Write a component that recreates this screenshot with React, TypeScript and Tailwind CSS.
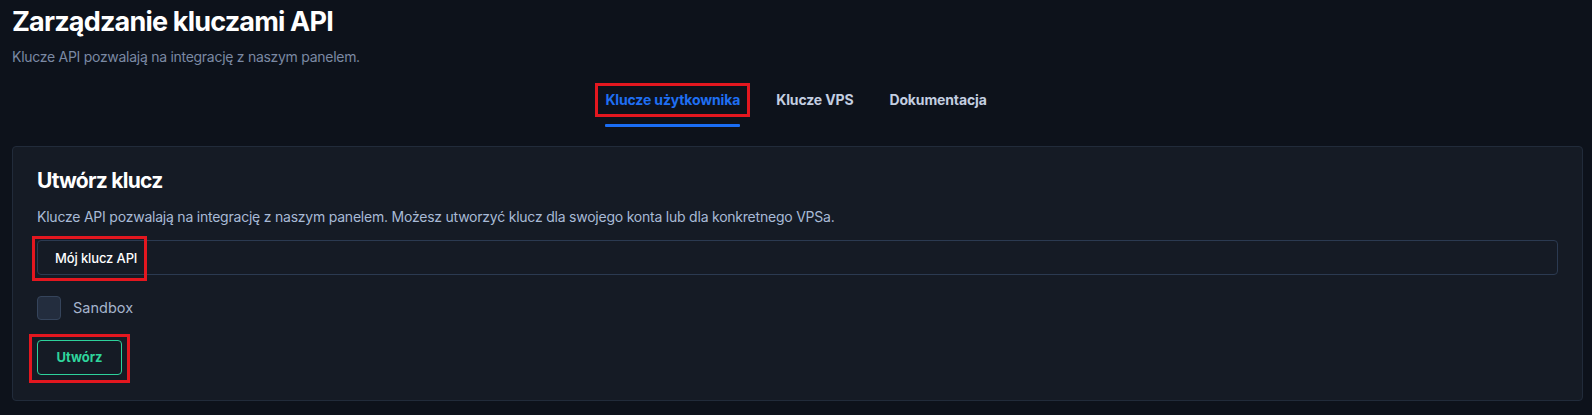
import React from "react";

const font = { fontFamily: "Inter, 'Noto Sans', sans-serif" };

function Tab({ label, active, marked }: { label: string; active?: boolean; marked?: boolean }) {
  return (
    <div className="flex flex-col">
      <div
        className={`border-[3px] px-[7px] py-[4px] ${marked ? "border-[#e3171f]" : "border-transparent"}`}
      >
        <span
          className={`block text-[14px] leading-[20px] font-bold tracking-[-0.01em] ${
            active ? "text-[#1f6ff3]" : "text-[#c3cee0]"
          }`}
        >
          {label}
        </span>
      </div>
      <div className={`mx-[10px] mt-[7px] h-[3px] rounded-[1px] ${active ? "bg-[#1a6df4]" : "bg-transparent"}`} />
    </div>
  );
}

export default function App() {
  return (
    <div className="min-h-[415px] bg-[#0d121b] pl-3 pr-[9px]" style={font}>
      <h1 className="pt-[4px] text-[27px] leading-[36px] font-bold tracking-[-0.03em] text-white">
        Zarządzanie kluczami API
      </h1>
      <p className="mt-[7px] text-[14px] leading-[20px] text-[#7b89a3] tracking-[-0.02em]">
        Klucze API pozwalają na integrację z naszym panelem.
      </p>

      <div className="mt-[16px] flex justify-center gap-[16px] pr-[3px]">
        <Tab label="Klucze użytkownika" active marked />
        <Tab label="Klucze VPS" />
        <Tab label="Dokumentacja" />
      </div>

      <div className="mt-[19px] rounded-[4px] border border-[#212b3a] bg-[#151b25] px-[24px] pt-[20px] pb-[25px]">
        <h2 className="text-[21px] leading-[28px] font-bold tracking-[-0.035em] text-white">Utwórz klucz</h2>
        <p className="mt-[12px] text-[14px] leading-[20px] text-[#a8bad6] tracking-[-0.016em]">
          Klucze API pozwalają na integrację z naszym panelem. Możesz utworzyć klucz dla swojego konta lub dla
          konkretnego VPSa.
        </p>

        <div className="relative mt-[13px]">
          <input
            readOnly
            value="Mój klucz API"
            className="block h-[35px] w-full rounded-[4px] border border-[#2b3a51] bg-[#151b25] pl-[17px] text-[13px] font-medium tracking-[-0.01em] text-white outline-none"
            style={font}
          />
          <div className="pointer-events-none absolute left-[-5px] top-[-4px] h-[45px] w-[115px] border-[3px] border-[#e3171f]" />
        </div>

        <label className="mt-[21px] flex items-center gap-[12px]">
          <span className="block h-[24px] w-[24px] rounded-[4px] border border-[#35445b] bg-[#232d3e]" />
          <span className="text-[14.5px] leading-[20px] text-[#a5b4cc]">Sandbox</span>
        </label>

        <div className="relative mt-[20px] w-[85px]">
          <button className="block h-[35px] w-[85px] rounded-[4px] border border-[#2dd29b] bg-transparent text-[13px] font-bold text-[#2fd49c]">
            Utwórz
          </button>
          <div className="pointer-events-none absolute left-[-8px] top-[-6px] h-[49px] w-[101px] border-[3px] border-[#e3171f]" />
        </div>
      </div>
    </div>
  );
}
